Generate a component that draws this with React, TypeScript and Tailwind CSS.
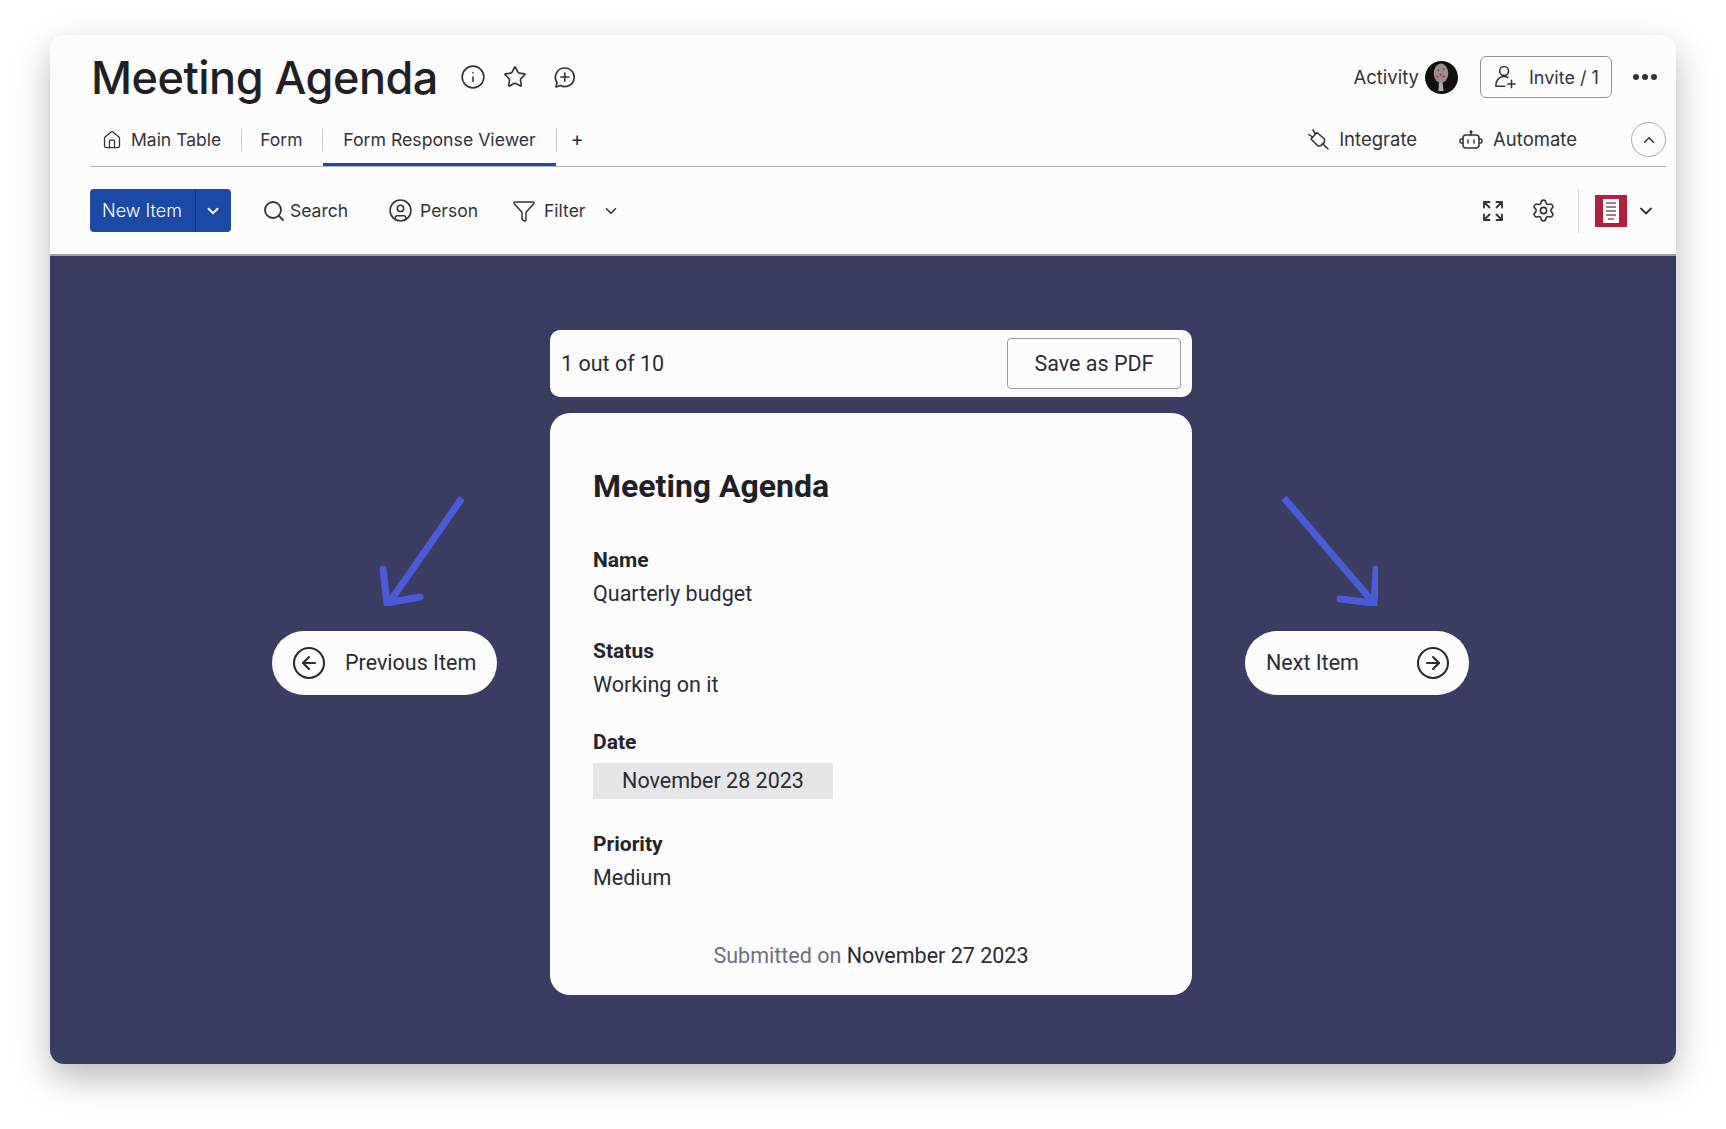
import React from "react";
import { Info, Star, Home, Search, CircleUser, Funnel, ChevronDown, ChevronUp, Settings, CircleArrowLeft, CircleArrowRight } from "lucide-react";

const ui = "font-['Inter',sans-serif]";
const rb = "font-['Roboto',sans-serif]";

function Sep({ cls }: { cls: string }) {
  return <div className={"w-px h-[22px] bg-[#c5c7d0] " + cls} />;
}

function Field({ label, value, cls }: { label: string; value: string; cls: string }) {
  return (
    <div className={cls}>
      <div className="text-[21px] leading-[34px] font-bold text-[#24252c]">{label}</div>
      <div className="text-[21.5px] leading-[34px] text-[#2b2c33]">{value}</div>
    </div>
  );
}

function PlugIcon() {
  return (
    <svg width="21" height="21" viewBox="0 0 21 21" fill="none" stroke="#323338" strokeWidth="1.5" strokeLinecap="round" strokeLinejoin="round">
      <path d="M9 3.500 L16.500 10 Q17 14 14 15.500 Q12.500 17.500 10 17 L3 10 Z" />
      <path d="M7.500 5 L5 1 M4.500 8 L0.800 5.500 M14.500 14.500 L20 20" />
    </svg>
  );
}

function BotIcon() {
  return (
    <svg width="24" height="20" viewBox="0 0 24 20" fill="none" stroke="#323338" strokeWidth="1.500" strokeLinecap="round" strokeLinejoin="round">
      <rect x="4" y="5" width="16" height="13" rx="3" />
      <path d="M12 5V2M4 9H2.500Q1 9 1 10.500V12Q1 13 2.500 13H4M20 9h1.500Q23 9 23 10.500V12Q23 13 21.500 13H20M9 10v3M15 10v3" />
      <circle cx="12" cy="1.800" r="0.800" />
    </svg>
  );
}

function ExpandIcon() {
  return (
    <svg width="22" height="22" viewBox="0 0 22 22" fill="none" stroke="#323338" strokeWidth="1.900" strokeLinecap="round" strokeLinejoin="round">
      <path d="M2 7.500V2H7.500M2 2L7.500 7.500M14.500 2H20V7.500M20 2L14.500 7.500M2 14.500V20H7.500M2 20L7.500 14.500M20 14.500V20H14.500M20 20L14.500 14.500" />
    </svg>
  );
}

function InviteIcon() {
  return (
    <svg width="23" height="24" viewBox="0 0 24 26" fill="none" stroke="#323338" strokeWidth="1.700" strokeLinecap="round" strokeLinejoin="round">
      <circle cx="10.500" cy="6.500" r="4.800" />
      <path d="M1.500 23 C1.500 16.500 5 12.500 10.500 12.500 C12 12.500 13.500 13 14.500 13.500 M1.500 23 H11 M18.500 16.500 V24.500 M14.500 20.500 H22.500" />
    </svg>
  );
}

function ChatPlusIcon() {
  return (
    <svg width="23" height="23" viewBox="0 0 23 23" fill="none" stroke="#323338" strokeWidth="1.700" strokeLinecap="round" strokeLinejoin="round">
      <path d="M11.800 2 A9.300 9.300 0 1 1 7.500 19.500 L3 21 L4 16.500 A9.300 9.300 0 0 1 11.800 2 Z" />
      <path d="M11.800 7V15M7.800 11H15.800" />
    </svg>
  );
}

function Avatar() {
  return (
    <svg width="33" height="33" viewBox="0 0 32 32" className="shrink-0">
      <circle cx="16" cy="16" r="16" fill="#14100e" />
      <ellipse cx="15.500" cy="12" rx="7" ry="9.500" fill="#9a8f8f" />
      <path d="M13.500 21 L13 29 H18 L17 21 Z" fill="#b5b0ae" />
      <circle cx="13" cy="9" r="1" fill="#b3283f" />
      <circle cx="18" cy="8" r="1" fill="#b3283f" />
      <circle cx="15" cy="13" r="1" fill="#b3283f" />
      <circle cx="18" cy="15" r="1" fill="#b3283f" />
      <circle cx="12" cy="15" r="1" fill="#b3283f" />
    </svg>
  );
}

function DocBadge() {
  return (
    <div className="w-[32px] h-[32px] bg-[#ae2140] flex items-center justify-center shrink-0">
      <svg width="16" height="24" viewBox="0 0 16 24">
        <rect width="16" height="24" fill="#fff" />
        <path d="M3 4h10M3 8h10M3 12h10M3 16h10M5 20h6" stroke="#8a5260" strokeWidth="1.500" />
      </svg>
    </div>
  );
}

export default function App() {
  return (
    <div className="w-[1726px] h-[1129px] bg-white pl-[50px] pt-[35px] overflow-hidden">
      <div className="w-[1626px] h-[1029px] rounded-[14px] flex flex-col bg-[#fcfcfd] shadow-[0_14px_36px_rgba(0,0,0,0.28)] overflow-hidden">
        <header className={"h-[221px] shrink-0 flex flex-col text-[#323338] border-b-2 border-[#9d9fb0] " + ui}>
          <div className="h-[84px] shrink-0 flex items-center pl-[41px] pr-[19px]">
            <h1 className="text-[45px] leading-none font-medium tracking-[-0.5px] text-[#1f2025]">Meeting Agenda</h1>
            <Info size={26} strokeWidth={1.500} className="ml-[22px]" />
            <Star size={24} strokeWidth={1.600} className="ml-[17px]" />
            <div className="ml-[26px] flex"><ChatPlusIcon /></div>
            <div className="flex-1" />
            <span className="text-[18.500px] pt-[2px]">Activity</span>
            <div className="ml-[6px]"><Avatar /></div>
            <button className="ml-[22px] w-[132px] h-[42px] border border-[#8f91a3] rounded-[6px] flex items-center pl-[13px] gap-[12px] text-[18px]">
              <InviteIcon />
              <span className="pt-[1px]">Invite / 1</span>
            </button>
            <div className="ml-[21px] flex gap-[3px]">
              <span className="w-[6px] h-[6px] rounded-full bg-[#323338]" />
              <span className="w-[6px] h-[6px] rounded-full bg-[#323338]" />
              <span className="w-[6px] h-[6px] rounded-full bg-[#323338]" />
            </div>
          </div>

          <div className="h-[48px] shrink-0 ml-[40px] mr-[10px] flex items-start border-b border-[#b0b2c2] text-[17.500px]">
            <div className="h-[47px] flex items-center pb-[5px] pl-[12px]">
              <Home size={20} strokeWidth={1.500} />
              <span className="ml-[9px]">Main Table</span>
              <Sep cls="ml-[20px]" />
            </div>
            <div className="h-[47px] flex items-center pb-[5px] pl-[18px]">
              <span>Form</span>
              <Sep cls="ml-[20px]" />
            </div>
            <div className="h-[47px] w-[233px] flex items-center justify-center border-b-[3px] border-[#1c4aa5] pb-[2px]">
              <span className="text-[17.700px] pr-[1px]">Form Response Viewer</span>
            </div>
            <div className="h-[47px] flex items-center pb-[5px]">
              <Sep cls="" />
              <span className="ml-[13px] text-[20px] leading-none pb-[3px]">+</span>
            </div>
            <div className="flex-1" />
            <div className="h-[47px] flex items-center pb-[6px] text-[18.500px]">
              <PlugIcon />
              <span className="ml-[10px]">Integrate</span>
              <div className="ml-[42px] flex"><BotIcon /></div>
              <span className="ml-[10px]">Automate</span>
              <div className="ml-[54px] w-[35px] h-[35px] rounded-full border border-[#a6a8b8] flex items-center justify-center">
                <ChevronUp size={18} strokeWidth={2} />
              </div>
            </div>
          </div>

          <div className="flex-1 flex items-center pl-[40px] pr-[20px] text-[17.500px]">
            <div className="w-[141px] h-[43px] rounded-[4px] bg-[#1b4aa5] text-white flex items-center text-[18px]">
              <span className="w-[104px] text-center font-light">New Item</span>
              <div className="w-px h-full bg-[#12337a] ml-[1px]" />
              <div className="flex-1 flex justify-center pr-[2px]"><ChevronDown size={18} strokeWidth={2.500} /></div>
            </div>
            <Search size={24} strokeWidth={1.800} className="ml-[31px]" />
            <span className="ml-[4px] pt-[1px]">Search</span>
            <CircleUser size={25} strokeWidth={1.500} className="ml-[40px]" />
            <span className="ml-[7px] pt-[1px]">Person</span>
            <Funnel size={24} strokeWidth={1.500} className="ml-[34px]" />
            <span className="ml-[8px] pt-[1px]">Filter</span>
            <ChevronDown size={18} strokeWidth={2} className="ml-[17px]" />
            <div className="flex-1" />
            <ExpandIcon />
            <Settings size={25} strokeWidth={1.500} className="ml-[27px]" />
            <div className="w-px h-[44px] bg-[#d8d9e0] ml-[22px]" />
            <div className="ml-[16px]"><DocBadge /></div>
            <ChevronDown size={20} strokeWidth={2.200} className="ml-[9px]" />
          </div>
        </header>

        <main className={"flex-1 bg-[#3a3c62] flex items-start pl-[222px] " + rb}>
          <div className="relative mt-[375px] shrink-0">
            <svg className="absolute left-[102px] top-[-137px]" width="90" height="112" viewBox="0 0 90 112" fill="none" stroke="#4a5bd8" strokeWidth="7" strokeLinecap="round">
              <path d="M88 4 L15 109" strokeLinecap="butt" />
              <path d="M9 75 L13 109 L46 103" />
            </svg>
            <button className="w-[225px] h-[64px] rounded-full bg-[#fcfcfd] flex items-center pl-[19px] text-[#2b2c33]">
              <CircleArrowLeft size={36} strokeWidth={1.400} className="shrink-0" />
              <span className="ml-[18px] text-[21.500px]">Previous Item</span>
            </button>
          </div>

          <div className="w-[642px] shrink-0 ml-[53px] mt-[74px] flex flex-col gap-[16px]">
            <div className="h-[67px] rounded-[10px] bg-[#fcfcfd] flex items-center justify-between pl-[11px] pr-[11px]">
              <span className="text-[21.500px] text-[#2b2c33] pt-[2px]">1 out of 10</span>
              <button className="w-[174px] h-[51px] rounded-[4px] border border-[#9a9bab] text-[21.500px] text-[#2b2c33] pt-[2px]">Save as PDF</button>
            </div>
            <div className="h-[582px] rounded-[20px] bg-[#fcfcfd] flex flex-col pl-[43px] pt-[50px] text-[#2b2c33]">
              <h2 className="text-[32px] leading-[46px] font-bold text-[#1f2025]">Meeting Agenda</h2>
              <Field label="Name" value="Quarterly budget" cls="mt-[34px]" />
              <Field label="Status" value="Working on it" cls="mt-[23px]" />
              <div className="mt-[23px]">
                <div className="text-[21px] leading-[34px] font-bold text-[#24252c]">Date</div>
                <div className="mt-[4px] w-[240px] h-[36px] bg-[#e6e6e9] flex items-center justify-center text-[21.500px]">November 28 2023</div>
              </div>
              <Field label="Priority" value="Medium" cls="mt-[28px]" />
              <div className="mt-[44px] mr-[43px] leading-[34px] text-center text-[21.500px]">
                <span className="text-[#6c6e82]">Submitted on </span>
                <span>November 27 2023</span>
              </div>
            </div>
          </div>

          <div className="relative mt-[375px] ml-[53px] shrink-0">
            <svg className="absolute left-[33px] top-[-137px]" width="100" height="112" viewBox="0 0 100 112" fill="none" stroke="#4a5bd8" strokeWidth="7" strokeLinecap="round">
              <path d="M6 4 L95 108" strokeLinecap="butt" />
              <path d="M98 75 L96 109 L62 105" />
            </svg>
            <button className="w-[224px] h-[64px] rounded-full bg-[#fcfcfd] flex items-center justify-between pl-[21px] pr-[18px] text-[#2b2c33]">
              <span className="text-[21.500px]">Next Item</span>
              <CircleArrowRight size={36} strokeWidth={1.400} className="shrink-0" />
            </button>
          </div>
        </main>
      </div>
    </div>
  );
}
